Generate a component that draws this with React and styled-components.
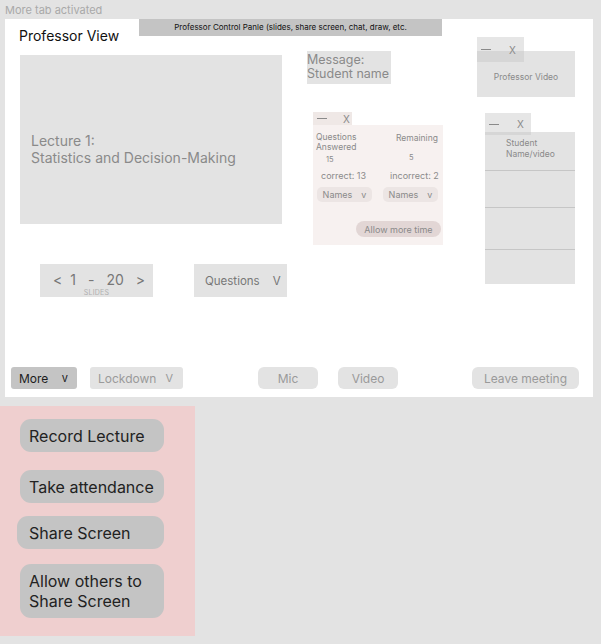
import React from "react";
import styled, { createGlobalStyle } from "styled-components";

const Global = createGlobalStyle`
  html, body { margin: 0; padding: 0; }
  body {
    background: #e3e3e3;
    font-family: Inter, "Noto Sans", sans-serif;
    width: 601px;
    height: 644px;
    overflow: hidden;
  }
`;

const Page = styled.div`
  width: 601px;
  height: 644px;
  display: flex;
  flex-direction: column;
`;

const Caption = styled.div`
  height: 19px;
  box-sizing: border-box;
  padding: 2px 0 0 5px;
  line-height: 17px;
  font-size: 11px;
  color: #a9a9a9;
`;

const Panel = styled.section`
  position: relative;
  margin-left: 5px;
  width: 588px;
  height: 378px;
  background: #ffffff;
  display: flex;
  flex-direction: column;
`;

const Header = styled.div`
  display: grid;
  grid-template-columns: 134px 303px;
  height: 36px;
`;

const Title = styled.h1`
  margin: 0;
  padding: 8px 0 0 14px;
  font-size: 14px;
  line-height: 18px;
  font-weight: 400;
  color: #111;
`;

const ControlLabel = styled.div`
  height: 17px;
  background: #c4c4c4;
  font-size: 8px;
  line-height: 17px;
  text-align: center;
  color: #111;
  font-family: Inter, "Liberation Sans", sans-serif;
`;

const Slide = styled.div`
  margin-left: 15px;
  width: 262px;
  height: 169px;
  box-sizing: border-box;
  padding: 77px 11px 0;
  background: #e3e3e3;
  color: #8a8a8a;
  font-size: 14px;
  line-height: 17px;
`;

const ControlsRow = styled.div`
  display: flex;
  gap: 41px;
  margin-top: 40px;
  padding-left: 35px;
`;

const Pager = styled.div`
  width: 113px;
  height: 33px;
  box-sizing: border-box;
  padding-top: 9px;
  background: #e3e3e3;
  display: flex;
  flex-direction: column;
  align-items: center;
`;

const PagerNums = styled.div`
  display: flex;
  gap: 12px;
  font-size: 14px;
  line-height: 14px;
  color: #777;
  margin-left: 5px;
`;

const PagerArrow = styled.span`
  margin-right: ${(p) => p.$mr || 0}px;
`;

const PagerLabel = styled.div`
  font-size: 7px;
  line-height: 8px;
  margin-top: 2px;
  color: #b0b0b0;
  letter-spacing: 0.2px;
`;

const Dropdown = styled.div`
  width: 93px;
  height: 33px;
  box-sizing: border-box;
  padding-left: 11px;
  background: #e3e3e3;
  display: flex;
  align-items: center;
  gap: 13px;
  font-size: 11.5px;
  color: #777;
`;

const BottomBar = styled.div`
  display: flex;
  align-items: center;
  margin-top: 70px;
  padding: 0 14px 0 6px;
`;

const BarButton = styled.div`
  width: ${(p) => p.$w}px;
  height: 22px;
  margin-left: ${(p) => p.$ml || 0}px;
  box-sizing: border-box;
  padding: 0 ${(p) => (p.$center ? 0 : 8)}px;
  border-radius: ${(p) => p.$r || 3}px;
  background: ${(p) => (p.$active ? "#c4c4c4" : "#e3e3e3")};
  color: ${(p) => (p.$active ? "#1c1c1c" : "#9a9a9a")};
  font-size: 12px;
  display: flex;
  align-items: center;
  justify-content: ${(p) => (p.$center ? "center" : "space-between")};
`;

const Spacer = styled.div`
  flex: 1;
`;

const Caret = styled.span`
  font-size: 11px;
  padding-right: ${(p) => p.$pr || 0}px;
`;

const Window = styled.div`
  position: absolute;
  left: ${(p) => p.$x}px;
  top: ${(p) => p.$y}px;
  display: flex;
  flex-direction: column;
`;

const WinTab = styled.div`
  position: relative;
  z-index: 1;
  width: ${(p) => p.$w}px;
  height: ${(p) => p.$h}px;
  background: ${(p) => p.$bg};
  display: flex;
  align-items: center;
  gap: ${(p) => p.$gap || 17}px;
  padding-left: 4px;
  box-sizing: border-box;
  color: #8a8a8a;
  font-size: 10px;
`;

const Dash = styled.span`
  display: inline-block;
  width: 10px;
  height: 1px;
  background: #8a8a8a;
`;

const WinBody = styled.div`
  width: ${(p) => p.$w}px;
  height: ${(p) => p.$h}px;
  margin-top: ${(p) => -(p.$overlap || 0)}px;
  background: ${(p) => p.$bg};
  box-sizing: border-box;
`;

const MessageBox = styled.div`
  position: absolute;
  left: 302px;
  top: 32px;
  width: 84px;
  height: 33px;
  box-sizing: border-box;
  padding-top: 2px;
  background: #e3e3e3;
  color: #8a8a8a;
  font-size: 12.5px;
  line-height: 14px;
`;

const VideoLabel = styled.div`
  padding-top: 21px;
  text-align: center;
  font-size: 8.5px;
  line-height: 11px;
  color: #8a8a8a;
`;

const StatsGrid = styled.div`
  display: grid;
  grid-template-columns: 65px 65px;
  align-items: start;
  padding-top: 8px;
`;

const Stat = styled.div`
  margin-left: ${(p) => p.$ml || 0}px;
  margin-top: ${(p) => p.$mt || 0}px;
  font-size: ${(p) => p.$size || 8.5}px;
  line-height: ${(p) => p.$lh || 9.5}px;
  color: #8a8a8a;
  white-space: nowrap;
`;

const Pill = styled.div`
  margin-left: ${(p) => p.$ml || 0}px;
  margin-top: ${(p) => p.$mt || 0}px;
  width: ${(p) => p.$w}px;
  height: ${(p) => p.$h}px;
  border-radius: ${(p) => p.$r || 5}px;
  background: ${(p) => p.$bg || "#ece5e4"};
  color: #8a8a8a;
  font-size: 9px;
  display: flex;
  align-items: center;
  justify-content: center;
  gap: ${(p) => p.$gap || 0}px;
  white-space: nowrap;
`;

const AllowRow = styled.div`
  display: flex;
  justify-content: flex-end;
  padding-right: 2px;
  margin-top: 19px;
`;

const Slot = styled.div`
  height: ${(p) => p.$h}px;
  border-top: ${(p) => (p.$first ? "none" : "1.5px solid #c6c6c6")};
  box-sizing: border-box;
  padding: ${(p) => (p.$first ? "6px 0 0 21px" : 0)};
  font-size: 8.5px;
  line-height: 10.5px;
  color: #8a8a8a;
`;

/* "More" menu */
const MoreMenu = styled.aside`
  margin-top: 9px;
  width: 195px;
  height: 230px;
  box-sizing: border-box;
  padding: 13px 0 0 20px;
  background: #efcfcf;
  display: flex;
  flex-direction: column;
`;

const MenuButton = styled.div`
  margin-top: ${(p) => p.$mt || 0}px;
  margin-left: ${(p) => p.$ml || 0}px;
  width: ${(p) => 144 - (p.$ml || 0)}px;
  min-height: 33px;
  box-sizing: border-box;
  padding: ${(p) => (p.$tall ? "7px" : "0")} 0 ${(p) => (p.$tall ? "7px" : "0")} ${(p) => 9 - (p.$ml || 0)}px;
  border-radius: 11px;
  background: #c4c4c4;
  color: #222;
  font-size: 16px;
  line-height: 20px;
  display: flex;
  align-items: center;
`;

export default function App() {
  return (
    <Page>
      <Global />
      <Caption>More tab activated</Caption>
      <Panel>
        <Header>
          <Title>Professor View</Title>
          <ControlLabel>
            Professor Control Panle (slides, share screen, chat, draw, etc.
          </ControlLabel>
        </Header>
        <Slide>
          Lecture 1:
          <br />
          Statistics and Decision-Making
        </Slide>
        <ControlsRow>
          <Pager>
            <PagerNums>
              <PagerArrow $mr={-4}>&lt;</PagerArrow>
              <span>1</span>
              <span>-</span>
              <span>20</span>
              <PagerArrow>&gt;</PagerArrow>
            </PagerNums>
            <PagerLabel>SLIDES</PagerLabel>
          </Pager>
          <Dropdown>
            <span>Questions</span>
            <span>V</span>
          </Dropdown>
        </ControlsRow>
        <BottomBar>
          <BarButton $w={66} $active>
            <span>More</span>
            <Caret $pr={1}>v</Caret>
          </BarButton>
          <BarButton $w={93} $ml={13}>
            <span>Lockdown</span>
            <Caret $pr={2}>V</Caret>
          </BarButton>
          <BarButton $w={60} $ml={75} $r={6} $center>
            Mic
          </BarButton>
          <BarButton $w={60} $ml={20} $r={6} $center>
            Video
          </BarButton>
          <Spacer />
          <BarButton $w={107} $r={6} $center>
            Leave meeting
          </BarButton>
        </BottomBar>

        <MessageBox>
          Message:
          <br />
          Student name
        </MessageBox>

        <Window $x={472} $y={18}>
          <WinTab $w={47} $h={25} $bg="rgba(197,197,197,0.43)" $gap={18}>
            <Dash />
            <span>X</span>
          </WinTab>
          <WinBody $w={98} $h={46} $overlap={11} $bg="#e3e3e3">
            <VideoLabel>Professor Video</VideoLabel>
          </WinBody>
        </Window>

        <Window $x={308} $y={93}>
          <WinTab $w={39} $h={13} $bg="#efe8e6" $gap={16}>
            <Dash />
            <span>X</span>
          </WinTab>
          <WinBody $w={130} $h={120} $bg="#f7f1f0">
            <StatsGrid>
              <Stat $ml={3}>
                Questions
                <br />
                Answered
              </Stat>
              <Stat $ml={18} $mt={1}>
                Remaining
              </Stat>
              <Stat $ml={13} $size={7.5} $lh={9} $mt={3}>
                15
              </Stat>
              <Stat $ml={31} $size={7.5} $lh={9} $mt={1}>
                5
              </Stat>
              <Stat $ml={8} $size={9} $lh={11} $mt={6}>
                correct: 13
              </Stat>
              <Stat $ml={12} $size={9} $lh={11} $mt={6}>
                incorrect: 2
              </Stat>
              <Pill $ml={4} $w={55} $h={15} $mt={6} $gap={9}>
                <span>Names</span>
                <span>v</span>
              </Pill>
              <Pill $ml={5} $w={55} $h={15} $mt={6} $gap={9}>
                <span>Names</span>
                <span>v</span>
              </Pill>
            </StatsGrid>
            <AllowRow>
              <Pill $w={85} $h={16} $r={8} $bg="#e2d6d5">
                Allow more time
              </Pill>
            </AllowRow>
          </WinBody>
        </Window>

        <Window $x={480} $y={94}>
          <WinTab $w={46} $h={22} $bg="rgba(197,197,197,0.43)" $gap={18}>
            <Dash />
            <span>X</span>
          </WinTab>
          <WinBody $w={90} $h={152} $overlap={3} $bg="#e3e3e3">
            <Slot $h={38} $first>
              Student
              <br />
              Name/video
            </Slot>
            <Slot $h={37} />
            <Slot $h={42} />
            <Slot $h={35} />
          </WinBody>
        </Window>
      </Panel>

      <MoreMenu>
        <MenuButton>Record Lecture</MenuButton>
        <MenuButton $mt={18}>Take attendance</MenuButton>
        <MenuButton $mt={13} $ml={-3}>
          Share Screen
        </MenuButton>
        <MenuButton $mt={15} $tall>
          Allow others to
          <br />
          Share Screen
        </MenuButton>
      </MoreMenu>
    </Page>
  );
}
